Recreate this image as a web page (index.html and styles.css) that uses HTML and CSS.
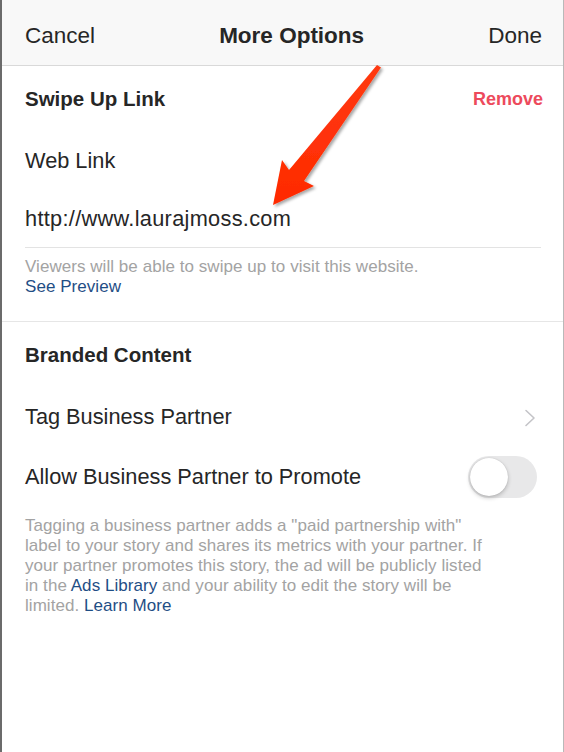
FILE: index.html
```html
<!DOCTYPE html>
<html>
<head>
<meta charset="utf-8">
<link rel="stylesheet" href="styles.css">
</head>
<body>
<div class="screen">
  <header class="nav">
    <span class="nav-btn">Cancel</span>
    <span class="nav-title">More Options</span>
    <span class="nav-btn">Done</span>
  </header>

  <section class="group">
    <div class="section-head">
      <span class="section-title">Swipe Up Link</span>
      <span class="remove">Remove</span>
    </div>
    <div class="row">Web Link</div>
    <div class="row url">http://www.laurajmoss.com</div>
    <p class="caption">Viewers will be able to swipe up to visit this website.<br><span class="link">See Preview</span></p>
  </section>

  <section class="group last">
    <div class="section-head">
      <span class="section-title">Branded Content</span>
    </div>
    <div class="row between">
      <span>Tag Business Partner</span>
      <svg class="chev" width="12" height="18" viewBox="0 0 12 18"><polyline points="2,1.5 10,9 2,16.5" fill="none" stroke="#c4c4c8" stroke-width="1.6" stroke-linecap="round" stroke-linejoin="round"/></svg>
    </div>
    <div class="row between toggle-row">
      <span>Allow Business Partner to Promote</span>
      <span class="toggle"><span class="knob"></span></span>
    </div>
    <p class="note">Tagging a business partner adds a "paid partnership with" label to your story and shares its metrics with your partner. If your partner promotes this story, the ad will be publicly listed in the <span class="link">Ads Library</span> and your ability to edit the story will be limited. <span class="link">Learn More</span></p>
  </section>

  <svg class="arrow" width="564" height="752" viewBox="0 0 564 752">
    <defs>
      <filter id="sh" x="-20%" y="-20%" width="140%" height="140%">
        <feDropShadow dx="2" dy="2" stdDeviation="1.5" flood-color="#000" flood-opacity="0.35"/>
      </filter>
      <linearGradient id="rg" x1="0" y1="0" x2="0" y2="1">
        <stop offset="0" stop-color="#ff3a12"/>
        <stop offset="1" stop-color="#ff2a00"/>
      </linearGradient>
    </defs>
    <polygon filter="url(#sh)" fill="url(#rg)" points="377,65 381,67.5 304,181 314,186 273,205 282,160 289,170"/>
  </svg>
</div>
</body>
</html>
```

FILE: styles.css
```css
* { box-sizing: border-box; }
html, body { margin: 0; padding: 0; background: #ffffff; }
body {
  font-family: "Liberation Sans", Arial, sans-serif;
  color: #262626;
}
.screen {
  position: relative;
  width: 564px;
  height: 752px;
  background: #ffffff;
  border-left: 2px solid #6b6b6b;
  border-right: 1px solid #b9b9b9;
  overflow: hidden;
}
.nav {
  height: 66px;
  background: #f8f8f8;
  border-bottom: 1px solid #d9d9d9;
  display: flex;
  align-items: center;
  justify-content: space-between;
  padding: 6px 21px 0 23px;
  font-size: 22.5px;
}
.nav-title { font-weight: bold; }
.group {
  border-bottom: 1px solid #e6e6e6;
}
.group.last { border-bottom: none; }
.section-head {
  height: 66px;
  display: flex;
  align-items: center;
  justify-content: space-between;
  padding: 0 20px 0 23px;
}
.section-title { font-size: 20.5px; font-weight: bold; }
.remove { color: #ed4a5c; font-size: 18px; font-weight: bold; }
.row {
  height: 58px;
  display: flex;
  align-items: center;
  padding: 0 27px 0 23px;
  font-size: 21.75px;
}
.row.url {
  margin: 0 22px 0 23px;
  padding: 0;
  border-bottom: 1px solid #e3e3e3;
  letter-spacing: 0.3px;
}
.between { justify-content: space-between; }
.toggle-row { height: 62px; padding-right: 26px; }
.caption, .note {
  margin: 0;
  font-size: 17px;
  line-height: 20px;
  letter-spacing: 0.05px;
  color: #a3a3a3;
  padding: 9px 22px 24px 23px;
}
.note { padding-top: 8px; width: 495px; padding-right: 0; }
.link { color: #1f4e85; }
.chev { display: block; margin-top: 1px; }
.toggle {
  position: relative;
  width: 69px;
  height: 42px;
  border-radius: 21px;
  background: #e8e8e9;
  display: block;
}
.knob {
  position: absolute;
  left: 2px;
  top: 2px;
  width: 38px;
  height: 38px;
  border-radius: 50%;
  background: #ffffff;
  box-shadow: 0 2px 4px rgba(0,0,0,0.22), 0 0 1px rgba(0,0,0,0.2);
}
.arrow {
  position: absolute;
  left: -2px;
  top: 0;
  pointer-events: none;
}
```
